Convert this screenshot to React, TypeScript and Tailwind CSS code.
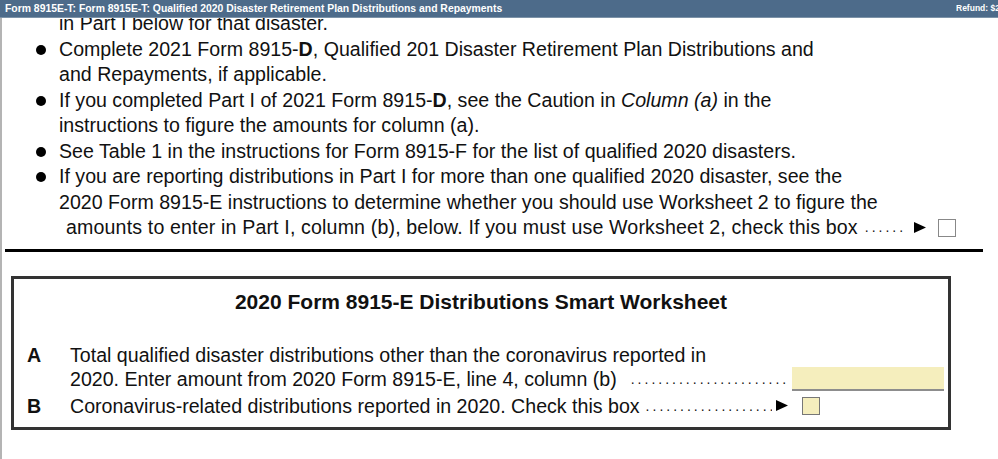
import React from 'react';

function Arrow() {
    return (
        <svg width="12" height="11" viewBox="0 0 12 11" className="flex-none">
            <polygon points="0,0 12,5.5 0,11" fill="#000" />
        </svg>
    );
}

function Bullet({ children }: { children: React.ReactNode }) {
    return (
        <li className="flex">
            <span className="w-[23px] flex-none pt-[8px]">
                <span className="block h-[10px] w-[10px] rounded-full bg-black" />
            </span>
            <div className="flex-1">{children}</div>
        </li>
    );
}

const dots = '.'.repeat(60);

export default function App() {
    return (
        <div
            className="flex h-[459px] w-[998px] flex-col overflow-hidden bg-white text-[#111]"
            style={{ fontFamily: '"Liberation Sans", Arial, sans-serif' }}
        >
            <div className="flex h-[18px] flex-none items-center justify-between border-b border-[#7d93a8] bg-[#4d6b8a] pl-[5px] text-white">
                <span className="whitespace-nowrap text-[10.4px] font-bold">
                    Form 8915E-T: Form 8915E-T: Qualified 2020 Disaster Retirement Plan Distributions and Repayments
                </span>
                <span className="w-[42px] overflow-hidden whitespace-nowrap text-[8.5px] font-bold">Refund: $2,</span>
            </div>

            <div className="flex-1 overflow-hidden border-l-2 border-[#b4b4b4]">
                <div className="mt-[-7px] text-[19.6px] leading-[25.5px]">
                    <div className="pl-[57px]">in Part I below for that disaster.</div>
                    <ul className="pl-[34px]">
                        <Bullet>
                            Complete 2021 Form 8915-<b>D</b>, Qualified 201 Disaster Retirement Plan Distributions and
                            <br />
                            and Repayments, if applicable.
                        </Bullet>
                        <Bullet>
                            If you completed Part I of 2021 Form 8915-<b>D</b>, see the Caution in <i>Column (a)</i> in the
                            <br />
                            instructions to figure the amounts for column (a).
                        </Bullet>
                        <Bullet>See Table 1 in the instructions for Form 8915-F for the list of qualified 2020 disasters.</Bullet>
                        <Bullet>
                            If you are reporting distributions in Part I for more than one qualified 2020 disaster, see the
                            <br />
                            2020 Form 8915-E instructions to determine whether you should use Worksheet 2 to figure the
                            <div className="flex items-center pl-[7px]">
                                <span className="whitespace-nowrap tracking-[0.15px]">
                                    amounts to enter in Part I, column (b), below. If you must use Worksheet 2, check this box
                                </span>
                                <span className="ml-[7px] text-[14px] tracking-[3px]">......</span>
                                <span className="ml-[8px]"><Arrow /></span>
                                <span className="ml-[12px] h-[18px] w-[18px] flex-none border border-[#888] bg-white" />
                            </div>
                        </Bullet>
                    </ul>
                </div>

                <div className="ml-[3px] mt-[8px] h-[3px] w-[978px] bg-black" />

                <div className="ml-[9px] mt-[24px] w-[940px] border-[3px] border-[#333] pb-[9px] pt-[10px]">
                    <div className="text-center text-[21px] font-bold leading-[26px]">
                        2020 Form 8915-E Distributions Smart Worksheet
                    </div>
                    <div className="mt-[28px] text-[19.6px] leading-[24.5px]">
                        <div className="flex">
                            <span className="w-[56px] flex-none pl-[13px] font-bold">A</span>
                            <div className="min-w-0 flex-1 pr-[4px]">
                                <div>Total qualified disaster distributions other than the coronavirus reported in</div>
                                <div className="flex items-center">
                                    <span className="whitespace-nowrap">2020. Enter amount from 2020 Form 8915-E, line 4, column (b)</span>
                                    <span className="ml-[14px] w-0 min-w-0 flex-1 overflow-hidden whitespace-nowrap text-[14px] tracking-[3px]">{dots}</span>
                                    <span className="ml-[2px] h-[24px] w-[152px] flex-none border-b-2 border-[#8d8d8d] bg-[#f5eebd]" />
                                </div>
                            </div>
                        </div>
                        <div className="mt-[2px] flex">
                            <span className="w-[56px] flex-none pl-[13px] font-bold">B</span>
                            <div className="flex min-w-0 flex-1 items-center pr-[4px]">
                                <span className="whitespace-nowrap">Coronavirus-related distributions reported in 2020. Check this box</span>
                                <span className="ml-[6px] w-0 min-w-0 flex-1 overflow-hidden whitespace-nowrap text-[14px] tracking-[3px]">{dots}</span>
                                <span className="ml-[4px]"><Arrow /></span>
                                <div className="ml-[4px] w-[152px] flex-none">
                                    <span className="ml-[10px] block h-[18px] w-[18px] border border-[#777] bg-[#f5eebd]" />
                                </div>
                            </div>
                        </div>
                    </div>
                </div>
            </div>
        </div>
    );
}
